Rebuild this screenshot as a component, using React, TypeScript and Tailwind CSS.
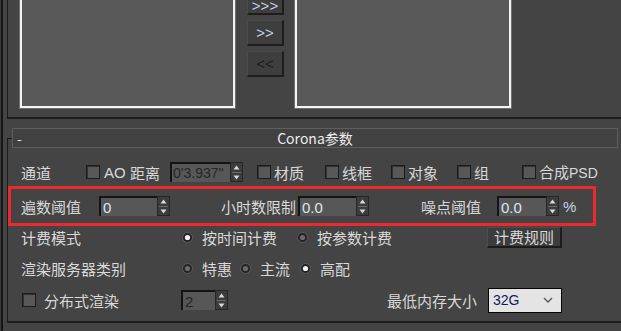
import React from "react";

const font = "font-['Noto_Sans_CJK_SC','Noto_Sans',sans-serif]";

function Spinner() {
  return (
    <div className="w-[13px] h-[20px] bg-[#3c3c3c] border border-[#262626] flex flex-col items-center justify-center">
      <svg width="7" height="5" viewBox="0 0 7 5"><polygon points="3.5,0.5 6.5,4.5 0.5,4.5" fill="#d8d8d8" /></svg>
      <div className="w-[9px] h-px bg-[#6a6a6a] my-[2px]" />
      <svg width="7" height="5" viewBox="0 0 7 5"><polygon points="0.5,0.5 6.5,0.5 3.5,4.5" fill="#d8d8d8" /></svg>
    </div>
  );
}

function NumInput({ w, value, dim }: { w: string; value: string; dim?: boolean }) {
  return (
    <div className="flex items-center">
      <div
        className={`${w} h-[20px] bg-[#575757] border-t-2 border-l-2 border-[#141414] flex items-center pl-[2px] text-[15px] leading-none font-['Liberation_Sans',sans-serif] whitespace-nowrap overflow-hidden ${
          dim ? "text-[#262626]" : "text-[#dfe4ee]"
        }`}
      >
        {value}
      </div>
      <Spinner />
    </div>
  );
}

function Check() {
  return <div className="w-[14px] h-[14px] bg-[#585858] border border-[#1c1c1c] shadow-[inset_1px_1px_0_#333]" />;
}

function Radio({ on }: { on?: boolean }) {
  return (
    <svg width="11" height="11" viewBox="0 0 11 11">
      <circle cx="5.5" cy="5.5" r="5" fill="#232323" stroke="#5e5e5e" strokeWidth="1" />
      <circle cx="5.5" cy="5.5" r="2.6" fill={on ? "#f2f2f2" : "#6a6a6a"} />
    </svg>
  );
}

function CheckItem({ label, w }: { label: string; w: string }) {
  return (
    <div className={`${w} flex items-center`}>
      <Check />
      <span className="ml-[3px]">{label}</span>
    </div>
  );
}

function RadioItem({ label, w, on }: { label: string; w: string; on?: boolean }) {
  return (
    <div className={`${w} flex items-center`}>
      <Radio on={on} />
      <span className="ml-[9px]">{label}</span>
    </div>
  );
}

function ListBox({ w }: { w: string }) {
  return (
    <div className={`${w} h-[109px] border-x border-b border-[#707070]`}>
      <div className="h-full border-x-2 border-b-2 border-[#f4f4f4] bg-[#595959]" />
    </div>
  );
}

function ArrowBtn({ label, cls, extra }: { label: string; cls: string; extra: string }) {
  return (
    <div
      className={`w-[37px] h-[26px] bg-[#3e3e3e] border-b-2 border-r-2 border-[#1e1e1e] border-t border-l border-t-[#4a4a4a] border-l-[#4a4a4a] flex items-center justify-center text-[15px] font-['Liberation_Sans',sans-serif] ${cls} ${extra}`}
    >
      {label}
    </div>
  );
}

export default function App() {
  return (
    <div className={`w-[621px] h-[331px] overflow-hidden bg-[#444444] flex ${font} text-[15px] text-[#d9d9d9] leading-none`}>
      <div className="w-px h-full bg-[#3a3a3a]" />
      <div className="w-[2px] h-full bg-[#161616]" />
      <div className="w-[4px] h-full" />
      <div className="flex-1 flex flex-col min-w-0">
        {/* top panel */}
        <div className="h-[119px] border-l border-b-2 border-[#1c1c1c] flex pl-[11px]">
          <ListBox w="w-[217px]" />
          <div className="ml-[11px] flex flex-col gap-[5px]">
            <ArrowBtn label=">>>" cls="text-[#c4d2ea] items-end pb-[2px] leading-[11px]" extra="-mt-[11px]" />
            <ArrowBtn label=">>" cls="text-[#c4d2ea] leading-none" extra="" />
            <ArrowBtn label="<<" cls="text-[#201b16] leading-none" extra="" />
          </div>
          <div className="ml-[10px]">
            <ListBox w="w-[218px]" />
          </div>
        </div>

        {/* rollout header */}
        <div className="mt-[9px] h-[20px] flex">
          <div className="w-[5px] mt-[10px] border-l border-t border-[#1c1c1c]" />
          <div className="w-[606px] h-[20px] bg-[#414141] border border-[#5e5e5e] flex items-center">
            <span className="w-[20px] pl-[4px] text-[#e6e6e6] text-[14px]">-</span>
            <span className="flex-1 text-center text-[14px] text-[#ececec]">Corona参数</span>
            <span className="w-[20px]" />
          </div>
        </div>

        {/* body */}
        <div className="h-[175px] border-l border-b-2 border-[#1c1c1c] flex flex-col pt-[10px]">
          {/* row 1 */}
          <div className="h-[28px] flex items-center pl-[13px]">
            <span className="w-[65px]">通道</span>
            <Check />
            <span className="ml-[4px] w-[26px] font-['Liberation_Sans',sans-serif] text-[15px]">AO</span>
            <span className="w-[40px]">距离</span>
            <div className="flex items-center">
              <div className="w-[60px] h-[20px] bg-[#575757] border-t-2 border-l-2 border-[#141414] flex items-center pl-[1px] text-[14px] leading-none font-['Liberation_Sans',sans-serif] whitespace-nowrap overflow-hidden text-[#262626]">
                0'3.937"
              </div>
              <Spinner />
            </div>
            <div className="w-[14px]" />
            <CheckItem label="材质" w="w-[68px]" />
            <CheckItem label="线框" w="w-[66px]" />
            <CheckItem label="对象" w="w-[66px]" />
            <CheckItem label="组" w="w-[65px]" />
            <div className="flex items-center">
              <Check />
              <span className="ml-[3px]">
                合成<span className="font-['Liberation_Sans',sans-serif] text-[14px]">PSD</span>
              </span>
            </div>
          </div>

          {/* row 2 - red box */}
          <div className="h-[40px] w-[588px] border-[3px] border-[#ec2a2e] flex items-center pl-[10px]">
            <span className="w-[78px]">遍数阈值</span>
            <NumInput w="w-[58px]" value="0" />
            <span className="w-[128px] text-right pr-[2px]">小时数限制</span>
            <NumInput w="w-[58px]" value="0.0" />
            <span className="ml-[52px] w-[76px]">噪点阈值</span>
            <NumInput w="w-[49px]" value="0.0" />
            <span className="ml-[4px] text-[#c8d4ea] font-['Liberation_Sans',sans-serif] text-[15px]">%</span>
          </div>

          {/* row 3 */}
          <div className="h-[22px] flex items-center pl-[13px]">
            <span className="w-[161px]">计费模式</span>
            <RadioItem label="按时间计费" w="w-[115px]" on />
            <RadioItem label="按参数计费" w="w-[190px]" />
            <div className="w-[75px] h-[21px] bg-[#3c3c3c] border-t border-l border-[#4c4c4c] border-b-2 border-r-2 border-b-[#1c1c1c] border-r-[#1c1c1c] flex items-center justify-center">
              计费规则
            </div>
          </div>

          {/* row 4 */}
          <div className="h-[40px] flex items-center pl-[13px]">
            <span className="w-[161px]">渲染服务器类别</span>
            <RadioItem label="特惠" w="w-[58px]" />
            <RadioItem label="主流" w="w-[60px]" />
            <RadioItem label="高配" w="w-[60px]" on />
          </div>

          {/* row 5 */}
          <div className="h-[24px] flex items-center pl-[14px]">
            <Check />
            <span className="ml-[8px] w-[137px]">分布式渲染</span>
            <NumInput w="w-[34px]" value="2" dim />
            <span className="ml-[159px] w-[101px]">最低内存大小</span>
            <div className="w-[74px] h-[25px] bg-[#e4e4e4] border border-[#050505] flex items-center pl-[4px] pr-[8px]">
              <span className="flex-1 text-[#141a5c] text-[14px] font-['Liberation_Sans',sans-serif]">32G</span>
              <svg width="10" height="6" viewBox="0 0 10 6">
                <polyline points="1,1 5,5 9,1" fill="none" stroke="#555" strokeWidth="1.3" />
              </svg>
            </div>
          </div>
        </div>
      </div>
    </div>
  );
}
